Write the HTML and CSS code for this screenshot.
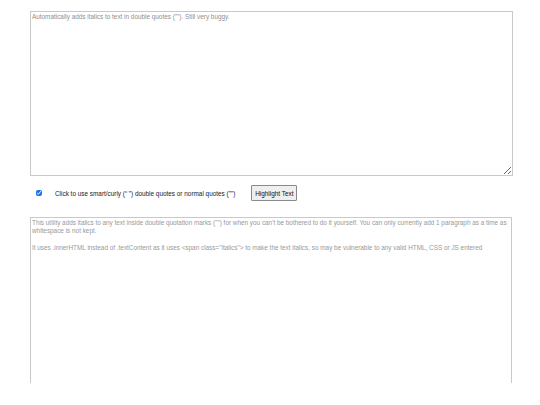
FILE: index.html
```html
<!DOCTYPE html>
<html>
<head>
<meta charset="utf-8">
<link rel="stylesheet" href="styles.css">
</head>
<body>
<main class="page">
  <textarea class="input" placeholder="Automatically adds italics to text in double quotes (&quot;&quot;). Still very buggy."></textarea>
  <div class="controls">
    <input type="checkbox" class="check" id="smart" checked>
    <label for="smart" class="label">Click to use smart/curly (“ ”) double quotes or normal quotes (&quot;&quot;)</label>
    <button class="btn">Highlight Text</button>
  </div>
  <div class="output">
    <p>This utility adds italics to any text inside double quotation marks (&quot;&quot;) for when you can't be bothered to do it yourself. You can only currently add 1 paragraph as a time as whitespace is not kept.</p>
    <p>It uses .innerHTML instead of .textContent as it uses &lt;span class=&quot;italics&quot;&gt; to make the text italics, so may be vulnerable to any valid HTML, CSS or JS entered</p>
  </div>
</main>
</body>
</html>
```

FILE: styles.css
```css
html, body {
  margin: 0;
  padding: 0;
  background: #fff;
}
.page {
  padding: 11px 0 0 30px;
  font-family: "Liberation Sans", Arial, sans-serif;
}
.input {
  display: block;
  box-sizing: border-box;
  width: 483px;
  height: 165px;
  margin: 0;
  padding: 1px 1px;
  border: 1px solid #c9c9c9;
  font-family: "Liberation Sans", Arial, sans-serif;
  font-size: 6.38px;
  line-height: 8px;
  resize: both;
  outline: none;
}
.input::placeholder {
  color: #8f8f8f;
}
.controls {
  display: flex;
  align-items: center;
  height: 16px;
  margin-top: 9px;
}
.check {
  width: 6px;
  height: 6px;
  margin: 0 0 0 6px;
  accent-color: #1a73e8;
}
.label {
  margin-left: 13px;
  font-size: 6.4px;
  color: #222;
}
.btn {
  box-sizing: border-box;
  height: 16px;
  width: 46px;
  margin-left: 16px;
  padding: 0;
  font-family: "Liberation Sans", Arial, sans-serif;
  font-size: 6.4px;
  color: #111;
  background: #efefef;
  border: 1px solid #8a8a8a;
  border-radius: 1px;
}
.output {
  box-sizing: border-box;
  width: 482px;
  height: 166px;
  margin-top: 16px;
  padding: 1px 0 1px 1px;
  border: 1px solid #c9c9c9;
  border-bottom: 0;
  font-size: 6.38px;
  line-height: 8.3px;
  color: #999;
}
.output p {
  margin: 0 0 8.3px 0;
}
```
